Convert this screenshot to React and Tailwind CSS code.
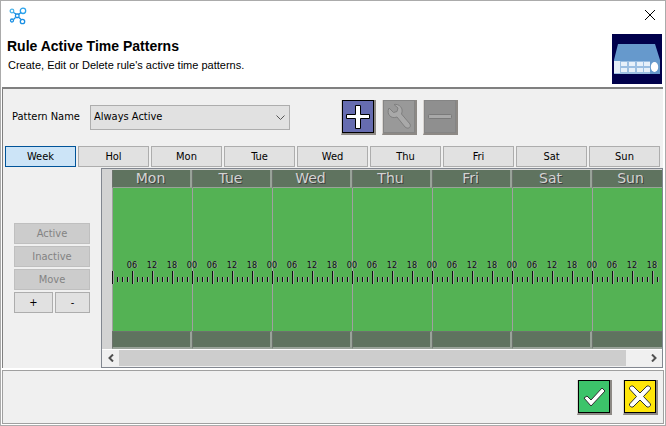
import React, { useState } from "react";

const DAYS = ["Mon", "Tue", "Wed", "Thu", "Fri", "Sat", "Sun"];
const TABS = ["Week", "Hol", ...DAYS];
const DAY_WIDTH = 80;
const TICK = 5;

const AppLogo = () => (
    <svg className="w-[18px] h-[18px]" viewBox="0 0 18 18" fill="none" stroke="#1a8fe3" strokeWidth="1.3">
        <circle cx="3" cy="4" r="1.800" stroke="#4db4ea" />
        <circle cx="14" cy="3.800" r="2.700" stroke="#2ba3ec" />
        <circle cx="3" cy="13.500" r="1.500" />
        <circle cx="13.500" cy="14.500" r="2.200" />
        <path d="M4.500 5.500 L7 7 M9.500 7.500 L12 5.500 M6.500 10.500 L4.500 12.500 M10 10.500 L12 12.500" />
        <rect x="6.500" y="7" width="3.500" height="3.500" rx="1" />
    </svg>
);

const RouterPicture = () => (
    <svg className="w-[50px] h-[50px]" viewBox="0 0 50 50">
        <rect width="50" height="50" fill="#00004b" />
        <path d="M6 10 H43 L48 26 V39 H2 V26 Z" fill="#6699cc" />
        <rect x="2" y="27" width="46" height="13" fill="#9cbfe2" />
        <rect x="38" y="26" width="10" height="14" fill="#6699cc" />
        <rect x="2" y="27" width="6" height="12" fill="#e4edf7" />
        {[9, 17, 25, 32].map((x) => (
            <g key={x} fill="#e8f1fa">
                <rect x={x} y="28" width="6" height="4" />
                <rect x={x} y="34" width="6" height="4" />
            </g>
        ))}
        <ellipse cx="42.500" cy="33" rx="3.700" ry="5" fill="#ffffff" />
    </svg>
);

const ToolButton = ({ label, color, disabled, children }) => (
    <button
        type="button"
        aria-label={label}
        disabled={disabled}
        className="w-[35px] h-[35px] shrink-0 border-l border-l-[#d8d4d0] border-r-2 border-b-2 border-r-[#8d8985] border-b-[#8d8985]"
    >
        <svg className="block w-8 h-[33px]" viewBox="0 0 32 33">
            <rect x="0.500" y="0.500" width="31" height="32" fill={color} stroke={disabled ? "#858585" : "#000000"} />
            {children}
        </svg>
    </button>
);

const PlainButton = ({ children, disabled }) => (
    <button
        type="button"
        disabled={disabled}
        className="h-[21px] w-full border border-[#adadad] bg-[#e1e1e1] leading-4 disabled:border-[#bfbfbf] disabled:bg-[#cccccc] disabled:text-[#838383]"
    >
        {children}
    </button>
);

// Green week with the hour ruler through the middle
const WeekChart = () => {
    const ticks = [];
    for (let i = 0; i < (DAYS.length * DAY_WIDTH) / TICK - 2; i++) {
        ticks.push(i);
    }
    return (
        <svg className="block h-[143px] w-[560px] max-w-none" shapeRendering="crispEdges">
            <rect width="560" height="143" fill="#54b254" />
            {DAYS.map((day, i) => (
                <rect key={day} x={i * DAY_WIDTH} y="0" width="1" height="143" fill="#a0a0a0" />
            ))}
            {ticks.map((i) => {
                const major = i % 4 === 0;
                return (
                    <g key={i}>
                        <rect x={i * TICK + 1} y={major ? 83 : 89} width="1" height={major ? 13 : 5} fill="#a0a0a0" />
                        <rect x={i * TICK} y={major ? 83 : 89} width="1" height={major ? 13 : 5} fill="#101010" />
                    </g>
                );
            })}
            {ticks.filter((i) => i % 4 === 0 && i > 0).map((i) => {
                const hour = String(((i / 4) * 6) % 24).padStart(2, "0");
                return (
                    <text
                        key={i}
                        x={i * TICK}
                        y="80"
                        textAnchor="middle"
                        fill="#101010"
                        className="text-[9px] [text-shadow:1px_0_#a0a0a0]"
                    >
                        {hour}
                    </text>
                );
            })}
        </svg>
    );
};

const App = () => {
    const [tab, setTab] = useState("Week");
    const [pattern, setPattern] = useState("Always Active");

    return (
        <div className="bg-[#ababab] px-px pt-px pb-px font-['DejaVu_Sans_Condensed','DejaVu_Sans',sans-serif] text-[11px] text-black">
            {/* Title bar and heading */}
            <header className="bg-white h-[86px] flex flex-col">
                <div className="flex justify-between pl-2 pr-[10px] pt-[6px] h-[33px]">
                    <AppLogo />
                    <button type="button" aria-label="Close" className="h-4">
                        <svg className="w-[10px] h-[10px]" viewBox="0 0 10 10" stroke="#000000" fill="none">
                            <path d="M0 0 L10 10 M10 0 L0 10" />
                        </svg>
                    </button>
                </div>
                <div className="flex justify-between pl-[6px] pr-[3px] font-['Liberation_Sans',sans-serif]">
                    <div className="pt-1">
                        <h1 className="text-[14px] leading-4 font-bold">Rule Active Time Patterns</h1>
                        <p className="pl-px pt-[3px] text-[11px] leading-4">Create, Edit or Delete rule's active time patterns.</p>
                    </div>
                    <RouterPicture />
                </div>
            </header>

            <div className="bg-white pl-px pr-[2px] pb-px">
                <main className="border-t-2 border-l border-[#808080] bg-[#f0f0f0]">
                    <div className="flex items-center h-[57px] pl-[9px]">
                        <label htmlFor="pattern" className="w-[78px] whitespace-nowrap">Pattern Name</label>
                        <div className="relative w-[200px] mr-[51px]">
                            <select
                                id="pattern"
                                value={pattern}
                                onChange={(e) => setPattern(e.target.value)}
                                className="appearance-none w-full h-[25px] pl-[3px] border border-[#adadad] bg-[#e1e1e1]"
                            >
                                <option>Always Active</option>
                            </select>
                            <svg className="absolute right-[5px] top-[10px] w-[9px] h-[6px] pointer-events-none" viewBox="0 0 9 6" fill="none" stroke="#555555">
                                <path d="M0.500 0.500 L4.500 4.500 L8.500 0.500" />
                            </svg>
                        </div>
                        <div className="flex gap-[6px]">
                            <ToolButton label="Add pattern" color="#666cb0">
                                <path d="M13.500 5.500 H18.500 V14.500 H27.500 V18.500 H18.500 V28.500 H13.500 V18.500 H4.500 V14.500 H13.500 Z" fill="#ffffff" stroke="#000000" strokeLinejoin="round" />
                            </ToolButton>
                            <ToolButton label="Edit pattern" color="#999999" disabled>
                                <path d="M6 8 L10.500 12.500 L14 11.500 L15 8 L11 4.500 C16 3.500 21 8 18.500 14 L27 24 C28.500 27.500 25 29.500 22 27 L14 17 C8 19.500 3 14 6 8 Z" fill="#a9a9a9" stroke="#7f7f7f" strokeLinejoin="round" />
                            </ToolButton>
                            <ToolButton label="Delete pattern" color="#8f8f8f" disabled>
                                <rect x="4.500" y="14.500" width="23" height="4" rx="1" fill="#a8a8a8" stroke="#7a7a7a" />
                            </ToolButton>
                        </div>
                    </div>

                    <div className="flex gap-[2px] pl-[2px] pr-[3px]">
                        {TABS.map((name) => (
                            <button
                                key={name}
                                type="button"
                                onClick={() => setTab(name)}
                                aria-pressed={tab === name}
                                className={
                                    tab === name
                                        ? "flex-1 h-[21px] border border-[#005499] bg-[#cce4f7] leading-4"
                                        : "flex-1 h-[21px] border border-[#adadad] bg-[#e1e1e1] leading-4"
                                }
                            >
                                {name}
                            </button>
                        ))}
                    </div>

                    <div className="flex pt-px">
                        <div className="w-[98px] shrink-0 flex flex-col gap-[2px] pt-[55px] pl-[11px] pr-[11px]">
                            <PlainButton disabled>Active</PlainButton>
                            <PlainButton disabled>Inactive</PlainButton>
                            <PlainButton disabled>Move</PlainButton>
                            <div className="flex gap-[2px]">
                                <div className="w-[39px]"><PlainButton>+</PlainButton></div>
                                <div className="flex-1"><PlainButton>-</PlainButton></div>
                            </div>
                        </div>

                        <div className="flex-1 min-w-0 border border-[#828790]">
                            <div className="flex overflow-hidden bg-[#d3d3d3] pl-[10px] pt-px">
                                <div className="flex-1 min-w-0 overflow-hidden">
                                    <div className="flex w-[560px]">
                                        {DAYS.map((day) => (
                                            <div
                                                key={day}
                                                className="w-20 h-[18px] shrink-0 border-b border-r-2 border-l border-[#99a399] border-l-[#6c736c] bg-[#5f735f] pr-[2px] text-center font-['DejaVu_Sans',sans-serif] text-[14px] leading-[17px] text-[#d3d3d3] [text-shadow:1px_1px_#404040]"
                                            >
                                                {day}
                                            </div>
                                        ))}
                                    </div>
                                    <WeekChart />
                                    <div className="flex w-[560px]">
                                        {DAYS.map((day) => (
                                            <div key={day} className="w-20 h-[18px] shrink-0 border-t border-l border-t-[#6c736c] border-l-[#6c736c] border-b-2 border-r-2 border-b-[#99a399] border-r-[#99a399] bg-[#5f735f]" />
                                        ))}
                                    </div>
                                </div>
                            </div>
                            <div className="flex h-[18px] border-t border-white bg-[#f0f0f0] pb-px">
                                <button type="button" aria-label="Scroll left" className="w-[17px] flex items-center justify-center">
                                    <svg className="w-[6px] h-2" viewBox="0 0 6 8" fill="none" stroke="#505050" strokeWidth="2">
                                        <path d="M5 0.500 L1.500 4 L5 7.500" />
                                    </svg>
                                </button>
                                <div className="flex-1 pr-[19px]">
                                    <div className="h-full bg-[#cdcdcd]" />
                                </div>
                                <button type="button" aria-label="Scroll right" className="w-[17px] flex items-center justify-center">
                                    <svg className="w-[6px] h-2" viewBox="0 0 6 8" fill="none" stroke="#505050" strokeWidth="2">
                                        <path d="M1 0.500 L4.500 4 L1 7.500" />
                                    </svg>
                                </button>
                            </div>
                        </div>
                    </div>
                </main>
            </div>

            <div className="bg-white px-px pt-px pb-px">
                <footer className="flex justify-end gap-[11px] h-[54px] border border-[#a0a0a0] bg-[#f0f0f0] pt-[9px] pr-[5px]">
                    <ToolButton label="OK" color="#3cc46a">
                        <path d="M6 18 L9 16 L13 20 L24 8 L27 11 L13 26 Z" fill="#ffffff" stroke="#303030" strokeLinejoin="round" />
                    </ToolButton>
                    <ToolButton label="Cancel" color="#ffe60a">
                        <path d="M9 6 L16 13 L23 6 C25 5.500 27 7 26.500 9 L19.500 16.500 L26.500 24 C27 26 25 27.500 23 27 L16 20 L9 27 C7 27.500 5 26 5.500 24 L12.500 16.500 L5.500 9 C5 7 7 5.500 9 6 Z" fill="#ffffff" stroke="#303030" strokeLinejoin="round" />
                    </ToolButton>
                </footer>
            </div>
        </div>
    );
};

export default App;
